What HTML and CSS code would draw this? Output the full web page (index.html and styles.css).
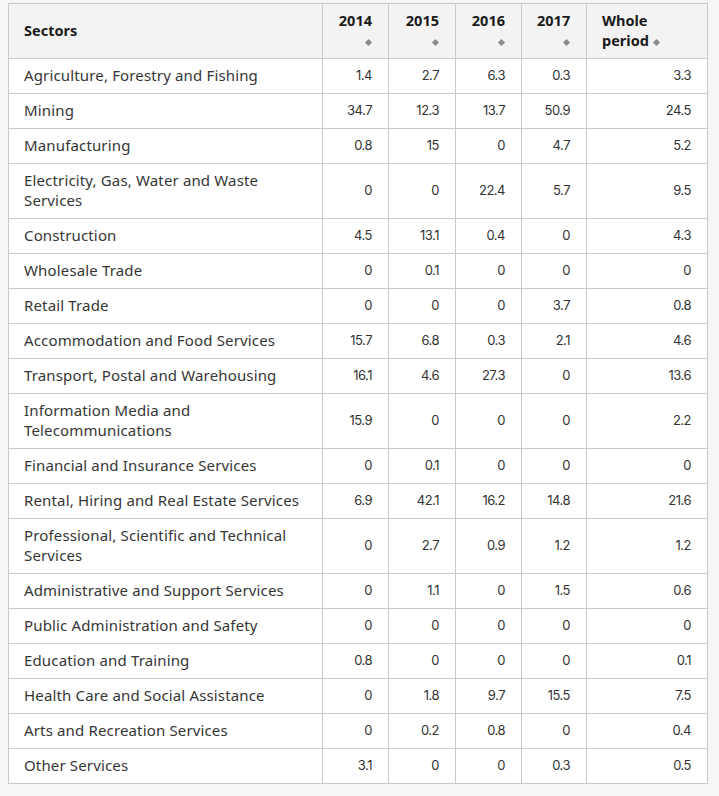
FILE: index.html
```html
<!DOCTYPE html>
<html lang="en">
<head>
<meta charset="utf-8">
<title>Sectors</title>
<link rel="stylesheet" href="styles.css">
</head>
<body>
<table class="data">
  <colgroup>
    <col class="c-sector">
    <col class="c-year">
    <col class="c-year2">
    <col class="c-year">
    <col class="c-year3">
    <col class="c-whole">
  </colgroup>
  <thead>
    <tr>
      <th class="h-sector">Sectors</th>
      <th class="h-num">2014 <span class="sort"></span></th>
      <th class="h-num">2015 <span class="sort"></span></th>
      <th class="h-num">2016 <span class="sort"></span></th>
      <th class="h-num">2017 <span class="sort"></span></th>
      <th class="h-whole">Whole period <span class="sort"></span></th>
    </tr>
  </thead>
  <tbody>
    <tr><td>Agriculture, Forestry and Fishing</td><td>1.4</td><td>2.7</td><td>6.3</td><td>0.3</td><td>3.3</td></tr>
    <tr><td>Mining</td><td>34.7</td><td>12.3</td><td>13.7</td><td>50.9</td><td>24.5</td></tr>
    <tr><td>Manufacturing</td><td>0.8</td><td>15</td><td>0</td><td>4.7</td><td>5.2</td></tr>
    <tr><td>Electricity, Gas, Water and Waste Services</td><td>0</td><td>0</td><td>22.4</td><td>5.7</td><td>9.5</td></tr>
    <tr><td>Construction</td><td>4.5</td><td>13.1</td><td>0.4</td><td>0</td><td>4.3</td></tr>
    <tr><td>Wholesale Trade</td><td>0</td><td>0.1</td><td>0</td><td>0</td><td>0</td></tr>
    <tr><td>Retail Trade</td><td>0</td><td>0</td><td>0</td><td>3.7</td><td>0.8</td></tr>
    <tr><td>Accommodation and Food Services</td><td>15.7</td><td>6.8</td><td>0.3</td><td>2.1</td><td>4.6</td></tr>
    <tr><td>Transport, Postal and Warehousing</td><td>16.1</td><td>4.6</td><td>27.3</td><td>0</td><td>13.6</td></tr>
    <tr><td>Information Media and Telecommunications</td><td>15.9</td><td>0</td><td>0</td><td>0</td><td>2.2</td></tr>
    <tr><td>Financial and Insurance Services</td><td>0</td><td>0.1</td><td>0</td><td>0</td><td>0</td></tr>
    <tr><td>Rental, Hiring and Real Estate Services</td><td>6.9</td><td>42.1</td><td>16.2</td><td>14.8</td><td>21.6</td></tr>
    <tr><td>Professional, Scientific and Technical Services</td><td>0</td><td>2.7</td><td>0.9</td><td>1.2</td><td>1.2</td></tr>
    <tr><td>Administrative and Support Services</td><td>0</td><td>1.1</td><td>0</td><td>1.5</td><td>0.6</td></tr>
    <tr><td>Public Administration and Safety</td><td>0</td><td>0</td><td>0</td><td>0</td><td>0</td></tr>
    <tr><td>Education and Training</td><td>0.8</td><td>0</td><td>0</td><td>0</td><td>0.1</td></tr>
    <tr><td>Health Care and Social Assistance</td><td>0</td><td>1.8</td><td>9.7</td><td>15.5</td><td>7.5</td></tr>
    <tr><td>Arts and Recreation Services</td><td>0</td><td>0.2</td><td>0.8</td><td>0</td><td>0.4</td></tr>
    <tr><td>Other Services</td><td>3.1</td><td>0</td><td>0</td><td>0.3</td><td>0.5</td></tr>
  </tbody>
</table>
</body>
</html>
```
FILE: styles.css
```css
html, body {
  background: #f6f6f6;
}
body {
  margin: 3px 0 0 8px;
  font-family: "Noto Sans", "Open Sans", sans-serif;
  color: #333;
}
.data {
  border-collapse: collapse;
  table-layout: fixed;
  width: 699px;
  background: #fff;
}
.c-sector { width: 314px; }
.c-year { width: 66px; }
.c-year2 { width: 67px; }
.c-year3 { width: 65px; }
.c-whole { width: 121px; }
.data th, .data td {
  border: 1px solid #c9c9c9;
  padding: 6px 16px 8px 15px;
  line-height: 20px;
  vertical-align: middle;
}
.data thead th {
  background: #f3f3f3;
  font-weight: 700;
  font-size: 14.5px;
  color: #1a1a1a;
}
.h-sector { text-align: left; }
.h-num { text-align: right; }
.h-whole { text-align: left; }
.sort {
  display: inline-block;
  width: 5px;
  height: 5px;
  background: #8a8a8a;
  transform: rotate(45deg);
  vertical-align: middle;
  margin: 0 1px 0 1px;
}
.data td {
  font-size: 15px;
  letter-spacing: 0.15px;
  color: #363636;
}
.data td + td {
  text-align: right;
  font-family: "Inter", "Noto Sans", sans-serif;
  font-size: 13px;
  letter-spacing: -0.5px;
  color: #333;
}
```
